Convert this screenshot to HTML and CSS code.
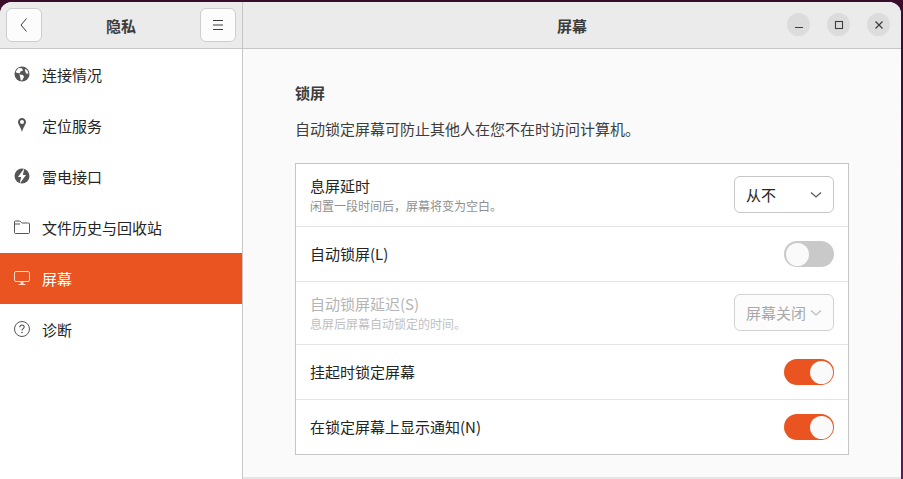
FILE: index.html
```html
<!DOCTYPE html>
<html>
<head>
  <title>隐私 - 屏幕</title>
  <meta charset="UTF-8" />
  <link rel="stylesheet" href="styles.css">
</head>
<body>
  <div class="window">
    <header class="titlebar">
      <div class="titlebar-left">
        <button class="head-btn">
          <svg width="16" height="16" viewBox="0 0 16 16"><path d="M10.5 1.5 5 8l5.5 6.5" fill="none" stroke="#3d3d3d" stroke-width="1"/></svg>
        </button>
        <span class="head-title">隐私</span>
        <button class="head-btn">
          <svg width="16" height="16" viewBox="0 0 16 16"><path d="M3 3.500h10M3 8h10M3 12.500h10" fill="none" stroke="#3d3d3d" stroke-width="1"/></svg>
        </button>
      </div>
      <div class="titlebar-right">
        <span class="head-title">屏幕</span>
        <div class="win-btns">
          <span class="win-btn"><svg width="16" height="16" viewBox="0 0 16 16"><path d="M4 10.500h8" stroke="#3d3d3d" stroke-width="1.200"/></svg></span>
          <span class="win-btn"><svg width="16" height="16" viewBox="0 0 16 16"><rect x="4.500" y="4.500" width="7" height="7" fill="none" stroke="#3d3d3d" stroke-width="1.100"/></svg></span>
          <span class="win-btn"><svg width="16" height="16" viewBox="0 0 16 16"><path d="M4.500 4.500l7 7M11.500 4.500l-7 7" stroke="#3d3d3d" stroke-width="1.200"/></svg></span>
        </div>
      </div>
    </header>
    <div class="content">
      <nav class="sidebar">
        <a class="nav-row">
          <svg class="nav-icon" width="16" height="16" viewBox="0 0 16 16"><circle cx="8" cy="8" r="7.500" fill="#555"/><path d="M4.500 2 8 2.200 9 4.500 6.500 5.500 5.500 7.500 2 6.500 1.800 5.500zM5.500 8.500l3.500.5 1 2-2 3.500-1.300-.3-.5-3zM10.800 2.800l2.500 1.500 1.200 3.200-2 .2-1.200-2z" fill="#fff"/></svg>
          <span>连接情况</span>
        </a>
        <a class="nav-row">
          <svg class="nav-icon" width="16" height="16" viewBox="0 0 16 16"><path d="M8 1C5.800 1 4 2.800 4 5c0 2.500 3 5.500 4 10 1-4.500 4-7.500 4-10 0-2.200-1.800-4-4-4zm0 2a2 2 0 1 1 0 4 2 2 0 0 1 0-4z" fill="#555" fill-rule="evenodd"/></svg>
          <span>定位服务</span>
        </a>
        <a class="nav-row">
          <svg class="nav-icon" width="16" height="16" viewBox="0 0 16 16"><circle cx="8" cy="8" r="7.500" fill="#555"/><path d="M10.500 0 4 9h3.200L5.500 16 12 7H8.800z" fill="#fff"/></svg>
          <span>雷电接口</span>
        </a>
        <a class="nav-row">
          <svg class="nav-icon" width="16" height="16" viewBox="0 0 16 16"><path d="M1.500 2h4c1.200 0 1.500 2 2.700 2h6.300a1 1 0 0 1 1 1v8.500a1 1 0 0 1-1 1h-13a1 1 0 0 1-1-1V3a1 1 0 0 1 1-1zM.5 5h5.500" fill="none" stroke="#555" stroke-width="1"/></svg>
          <span>文件历史与回收站</span>
        </a>
        <a class="nav-row active">
          <svg class="nav-icon" width="16" height="16" viewBox="0 0 16 16"><rect x=".5" y="1.500" width="15" height="10" rx="1.500" fill="none" stroke="#ffd9c9" stroke-width="1"/><path d="M6.500 12h3v2h2v1h-7v-1h2z" fill="#ffd9c9"/></svg>
          <span>屏幕</span>
        </a>
        <a class="nav-row">
          <svg class="nav-icon" width="16" height="16" viewBox="0 0 16 16"><circle cx="8" cy="8" r="7.500" fill="none" stroke="#555" stroke-width="1"/><path d="M5.800 6.200C5.800 4.900 6.800 4 8 4s2.200.9 2.200 2.100C10.200 7.600 8 7.800 8 9.500" fill="none" stroke="#555" stroke-width="1.100"/><circle cx="8" cy="11.500" r=".8" fill="#555"/></svg>
          <span>诊断</span>
        </a>
      </nav>
      <main class="panel">
        <div class="panel-inner">
          <h2 class="section-title">锁屏</h2>
          <p class="section-desc">自动锁定屏幕可防止其他人在您不在时访问计算机。</p>
          <div class="list">
            <div class="row row-tall">
              <div class="row-text">
                <div class="row-label">息屏延时</div>
                <div class="row-sub">闲置一段时间后，屏幕将变为空白。</div>
              </div>
              <div class="select">
                <span>从不</span>
                <svg width="12" height="12" viewBox="0 0 12 12"><path d="M1 3.500 6 8l5-4.500" fill="none" stroke="#555" stroke-width="1.100"/></svg>
              </div>
            </div>
            <div class="row">
              <div class="row-label">自动锁屏(L)</div>
              <div class="switch"><span class="knob"></span></div>
            </div>
            <div class="row row-tall disabled">
              <div class="row-text">
                <div class="row-label">自动锁屏延迟(S)</div>
                <div class="row-sub">息屏后屏幕自动锁定的时间。</div>
              </div>
              <div class="select select-off">
                <span>屏幕关闭</span>
                <svg width="12" height="12" viewBox="0 0 12 12"><path d="M1 3.500 6 8l5-4.500" fill="none" stroke="#bbb" stroke-width="1.100"/></svg>
              </div>
            </div>
            <div class="row">
              <div class="row-label">挂起时锁定屏幕</div>
              <div class="switch on"><span class="knob"></span></div>
            </div>
            <div class="row">
              <div class="row-label">在锁定屏幕上显示通知(N)</div>
              <div class="switch on"><span class="knob"></span></div>
            </div>
          </div>
        </div>
      </main>
    </div>
  </div>
</body>
</html>
```

FILE: styles.css
```css
html, body {
  height: 100%;
}
body {
  margin: 0;
  background: linear-gradient(#3a0c2c, #5e1b56);
  font-family: "Noto Sans CJK SC", "Noto Sans", sans-serif;
  font-size: 15px;
  color: #242424;
  overflow: hidden;
}
.window {
  width: 901px;
  height: 477px;
  margin-top: 2px;
  display: flex;
  flex-direction: column;
  border-radius: 12px 12px 0 0;
  overflow: hidden;
  background-color: #fafafa;
}
.titlebar {
  height: 46px;
  flex: none;
  display: flex;
  background-color: #ebebeb;
  border-bottom: 1px solid #c6c6c6;
}
.titlebar-left {
  width: 243px;
  box-sizing: border-box;
  flex: none;
  display: flex;
  align-items: center;
  justify-content: space-between;
  padding: 0 6px;
  border-right: 1px solid #c6c6c6;
}
.titlebar-right {
  flex: 1;
  position: relative;
  display: flex;
  align-items: center;
  justify-content: center;
}
.head-btn {
  width: 36px;
  height: 34px;
  padding: 0;
  display: flex;
  align-items: center;
  justify-content: center;
  background-color: #fcfcfc;
  border: 1px solid #cdcdcd;
  border-radius: 6px;
}
.head-title {
  font-size: 15px;
  font-weight: 700;
  color: #3d3d3d;
}
.win-btns {
  position: absolute;
  right: 11px;
  top: 11px;
  display: flex;
  gap: 17px;
}
.win-btn {
  width: 23px;
  height: 23px;
  border-radius: 50%;
  background-color: #dcdcdc;
  display: flex;
  align-items: center;
  justify-content: center;
}
.content {
  flex: 1;
  display: flex;
  min-height: 0;
}
.sidebar {
  width: 243px;
  box-sizing: border-box;
  flex: none;
  background-color: #fff;
  border-right: 1px solid #c6c6c6;
}
.nav-row {
  height: 51px;
  display: flex;
  align-items: center;
  gap: 12px;
  padding-left: 14px;
}
.nav-row.active {
  background-color: #e95420;
  color: #fff;
}
.nav-icon {
  flex: none;
  position: relative;
  top: -1px;
}
.panel {
  flex: 1;
  min-width: 0;
  border-bottom: 2px solid #e6e6e6;
}
.panel-inner {
  width: 554px;
  margin-left: 52px;
}
.section-title {
  margin: 33px 0 0;
  font-size: 15px;
  line-height: 22px;
  font-weight: 700;
  color: #3d3d3d;
}
.section-desc {
  margin: 14px 0 23px;
  font-size: 15px;
  line-height: 22px;
  color: #3d3d3d;
}
.list {
  background-color: #fff;
  border: 1px solid #c6c6c6;
}
.row {
  height: 54px;
  display: flex;
  align-items: center;
  justify-content: space-between;
  padding: 0 14px;
  border-bottom: 1px solid #e4e4e4;
}
.row:last-child {
  border-bottom: 0;
}
.row-tall {
  height: 62px;
}
.row-label {
  line-height: 22px;
}
.row-sub {
  font-size: 12px;
  line-height: 18px;
  color: #8f8f8f;
}
.disabled .row-label {
  color: #b4b4b4;
}
.disabled .row-sub {
  color: #c0c0c0;
}
.select {
  width: 100px;
  height: 37px;
  box-sizing: border-box;
  align-self: flex-start;
  margin-top: 12px;
  display: flex;
  align-items: center;
  justify-content: space-between;
  padding: 0 11px;
  border: 1px solid #c6c6c6;
  border-radius: 6px;
  background-color: #fff;
}
.select-off {
  color: #a8a8a8;
  background-color: #fcfcfc;
  border-color: #d2d2d2;
}
.switch {
  width: 50px;
  height: 26px;
  box-sizing: border-box;
  padding: 1.5px;
  display: flex;
  border-radius: 13px;
  background-color: #c9c9c9;
}
.switch.on {
  background-color: #e95420;
  justify-content: flex-end;
}
.knob {
  width: 23px;
  height: 23px;
  border-radius: 50%;
  background-color: #fafafa;
}
```
